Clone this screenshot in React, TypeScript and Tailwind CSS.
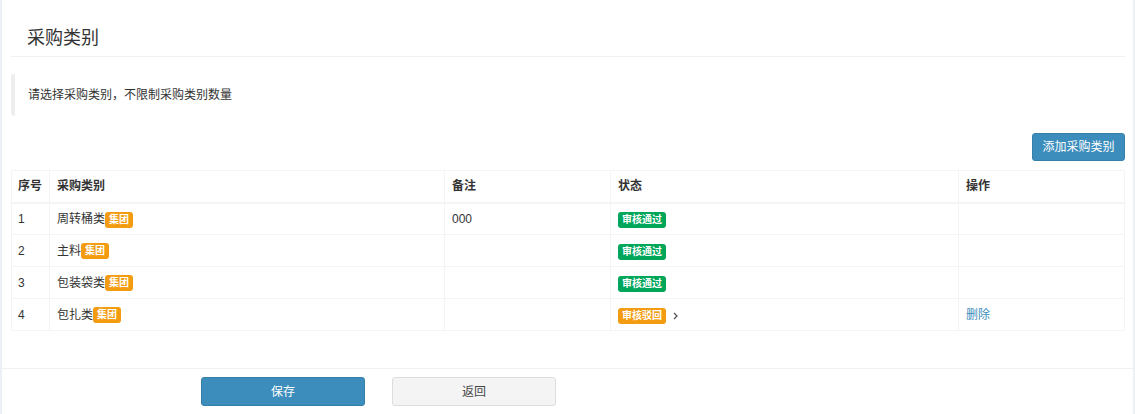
import React from "react";

const font = { fontFamily: '"Liberation Sans", "Noto Sans CJK SC", sans-serif' };

function Group() {
  return (
    <span className="inline-flex h-[16px] items-center rounded-[3px] bg-[#f39c12] px-[4px] align-middle text-[10px] font-bold leading-none text-white">
      集团
    </span>
  );
}

function Status({ ok }: { ok: boolean }) {
  return (
    <span
      className={
        "inline-flex h-[16px] items-center rounded-[3px] px-[4px] align-middle text-[10px] font-bold leading-none text-white " +
        (ok ? "bg-[#00a65a]" : "bg-[#f39c12]")
      }
    >
      {ok ? "审核通过" : "审核驳回"}
    </span>
  );
}

const rows = [
  { no: "1", name: "周转桶类", note: "000", ok: true },
  { no: "2", name: "主料", note: "", ok: true },
  { no: "3", name: "包装袋类", note: "", ok: true },
  { no: "4", name: "包扎类", note: "", ok: false },
];

export default function App() {
  return (
    <div className="flex h-[414px] bg-[#ecf0f5] px-[2px] text-[#333]" style={font}>
      <div className="flex flex-1 flex-col bg-white">
        <div className="pl-[9px] pr-[8px]">
          <div className="border-b border-[#eef0f3] pb-[5px] pl-[16px] pt-[25px] text-[18px] leading-[26px] text-[#333]">
            采购类别
          </div>
          <div className="mt-[17px] flex h-[42px] items-center rounded-[3px] border-l-[4px] border-[#eeeeee] pl-[13px] text-[12px] text-[#333]">
            请选择采购类别，不限制采购类别数量
          </div>
          <div className="mt-[17px] flex justify-end">
            <button className="h-[28px] w-[93px] rounded-[3px] border border-[#367fa9] bg-[#3c8dbc] text-[12px] text-white">
              添加采购类别
            </button>
          </div>
          <table className="mt-[9px] w-full table-fixed border-collapse whitespace-nowrap text-[12px]">
            <colgroup>
              <col className="w-[38px]" />
              <col className="w-[395px]" />
              <col className="w-[166px]" />
              <col className="w-[348px]" />
              <col />
            </colgroup>
            <thead>
              <tr className="h-[32px]">
                {["序号", "采购类别", "备注", "状态", "操作"].map((h, i) => (
                  <th
                    key={h}
                    className={
                      "border border-b-2 border-[#f4f4f4] text-left font-bold text-[#333] " +
                      (i === 0 ? "px-[6px]" : "px-[7px]")
                    }
                  >
                    {h}
                  </th>
                ))}
              </tr>
            </thead>
            <tbody>
              {rows.map((r) => (
                <tr key={r.no} className="h-[32px]">
                  <td className="border border-[#f4f4f4] px-[6px]">{r.no}</td>
                  <td className="border border-[#f4f4f4] px-[7px]">
                    {r.name}
                    <Group />
                  </td>
                  <td className="border border-[#f4f4f4] px-[7px]">{r.note}</td>
                  <td className="border border-[#f4f4f4] px-[7px]">
                    <span className="inline-flex items-center">
                      <Status ok={r.ok} />
                      {!r.ok && (
                        <svg className="ml-[7px]" width="5" height="8" viewBox="0 0 5 8">
                          <path d="M1 1l3 3-3 3" fill="none" stroke="#555" strokeWidth="1.3" />
                        </svg>
                      )}
                    </span>
                  </td>
                  <td className="border border-[#f4f4f4] px-[7px]">
                    {!r.ok && <span className="text-[#3c8dbc]">删除</span>}
                  </td>
                </tr>
              ))}
            </tbody>
          </table>
        </div>
        <div className="mt-[37px] flex gap-[27px] border-t border-[#f0f0f0] pl-[199px] pt-[8px]">
          <button className="h-[29px] w-[164px] rounded-[3px] border border-[#367fa9] bg-[#3c8dbc] text-[12px] text-white">
            保存
          </button>
          <button className="h-[29px] w-[164px] rounded-[3px] border border-[#dddddd] bg-[#f4f4f4] text-[12px] text-[#444]">
            返回
          </button>
        </div>
      </div>
    </div>
  );
}
